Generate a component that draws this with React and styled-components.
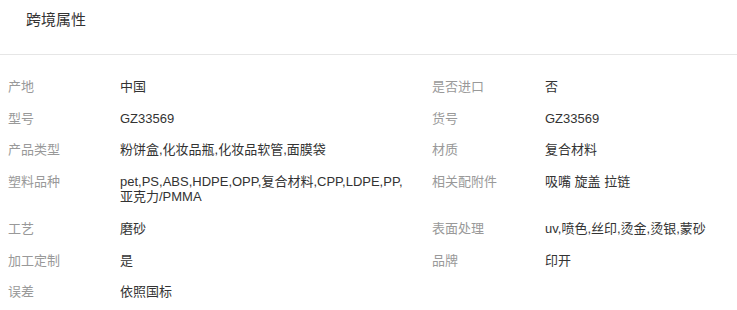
import styled, { createGlobalStyle } from 'styled-components';

const Global = createGlobalStyle`
  body {
    margin: 0;
    background: #fff;
    font-family: "Liberation Sans", "Noto Sans CJK SC", sans-serif;
  }
`;

const Panel = styled.div`
  width: 737px;
`;

const Head = styled.div`
  padding: 11px 26px 0;
  height: 43px;
  border-bottom: 1px solid #e6e6e6;
  font-size: 15px;
  line-height: 18px;
  color: #333;
`;

const Grid = styled.div`
  display: grid;
  grid-template-columns: 112px 312px 113px 1fr;
  padding: 16px 8px 0;
  font-size: 13px;
  line-height: 15.6px;
`;

const Label = styled.div`
  padding: 8px 0;
  color: #999;
`;

const Value = styled.div`
  padding: 8px 22px 8px 0;
  color: #333;
`;

const rows = [
  ['产地', '中国', '是否进口', '否'],
  ['型号', 'GZ33569', '货号', 'GZ33569'],
  ['产品类型', '粉饼盒,化妆品瓶,化妆品软管,面膜袋', '材质', '复合材料'],
  ['塑料品种', 'pet,PS,ABS,HDPE,OPP,复合材料,CPP,LDPE,PP,亚克力/PMMA', '相关配附件', '吸嘴 旋盖 拉链'],
  ['工艺', '磨砂', '表面处理', 'uv,喷色,丝印,烫金,烫银,蒙砂'],
  ['加工定制', '是', '品牌', '印开'],
  ['误差', '依照国标'],
];

export default function App() {
  return (
    <Panel>
      <Global />
      <Head>跨境属性</Head>
      <Grid>
        {rows.map((r, i) => [
          <Label key={i + 'a'}>{r[0]}</Label>,
          <Value key={i + 'b'}>{r[1]}</Value>,
          <Label key={i + 'c'}>{r[2] || ''}</Label>,
          <Value key={i + 'd'}>{r[3] || ''}</Value>,
        ])}
      </Grid>
    </Panel>
  );
}
